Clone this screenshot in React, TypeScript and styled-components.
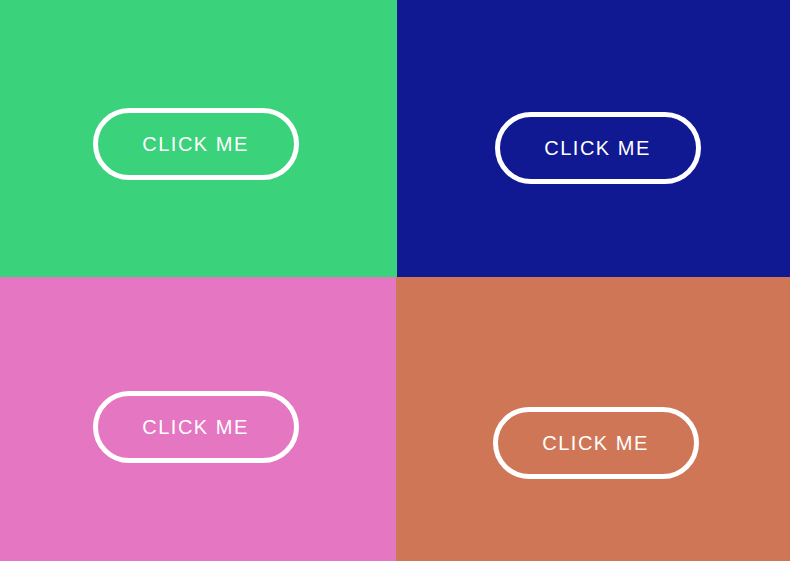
import React from "react";
import styled, { createGlobalStyle } from "styled-components";

const Global = createGlobalStyle`
  html, body { margin: 0; padding: 0; background: #ffffff; }
  body { font-family: "Liberation Sans", Arial, sans-serif; }
`;

const Page = styled.div`
  display: flex;
  flex-direction: column;
  width: 790px;
`;

const Row = styled.div<{ $h: number }>`
  display: flex;
  height: ${(p) => p.$h}px;
`;

const Quadrant = styled.div<{ $bg: string; $w: number; $pl: number; $pt: number }>`
  display: flex;
  align-items: flex-start;
  box-sizing: border-box;
  width: ${(p) => p.$w}px;
  flex: none;
  background: ${(p) => p.$bg};
  padding-left: ${(p) => p.$pl}px;
  padding-top: ${(p) => p.$pt}px;
`;

const Button = styled.button`
  box-sizing: border-box;
  width: 206px;
  height: 72px;
  border: 5px solid #ffffff;
  border-radius: 36px;
  background: transparent;
  color: #ffffff;
  font-family: "Liberation Sans", Arial, sans-serif;
  font-size: 20px;
  letter-spacing: 1.5px;
  text-transform: uppercase;
  padding: 0 1px 0 0;
  cursor: pointer;
`;

export default function App() {
  return (
    <Page>
      <Global />
      <Row $h={277}>
        <Quadrant $bg="#3ad27a" $w={397} $pl={93} $pt={108}>
          <Button>Click me</Button>
        </Quadrant>
        <Quadrant $bg="#101892" $w={393} $pl={98} $pt={112}>
          <Button>Click me</Button>
        </Quadrant>
      </Row>
      <Row $h={284}>
        <Quadrant $bg="#e576c1" $w={396} $pl={93} $pt={114}>
          <Button>Click me</Button>
        </Quadrant>
        <Quadrant $bg="#cf7656" $w={394} $pl={97} $pt={130}>
          <Button>Click me</Button>
        </Quadrant>
      </Row>
    </Page>
  );
}
